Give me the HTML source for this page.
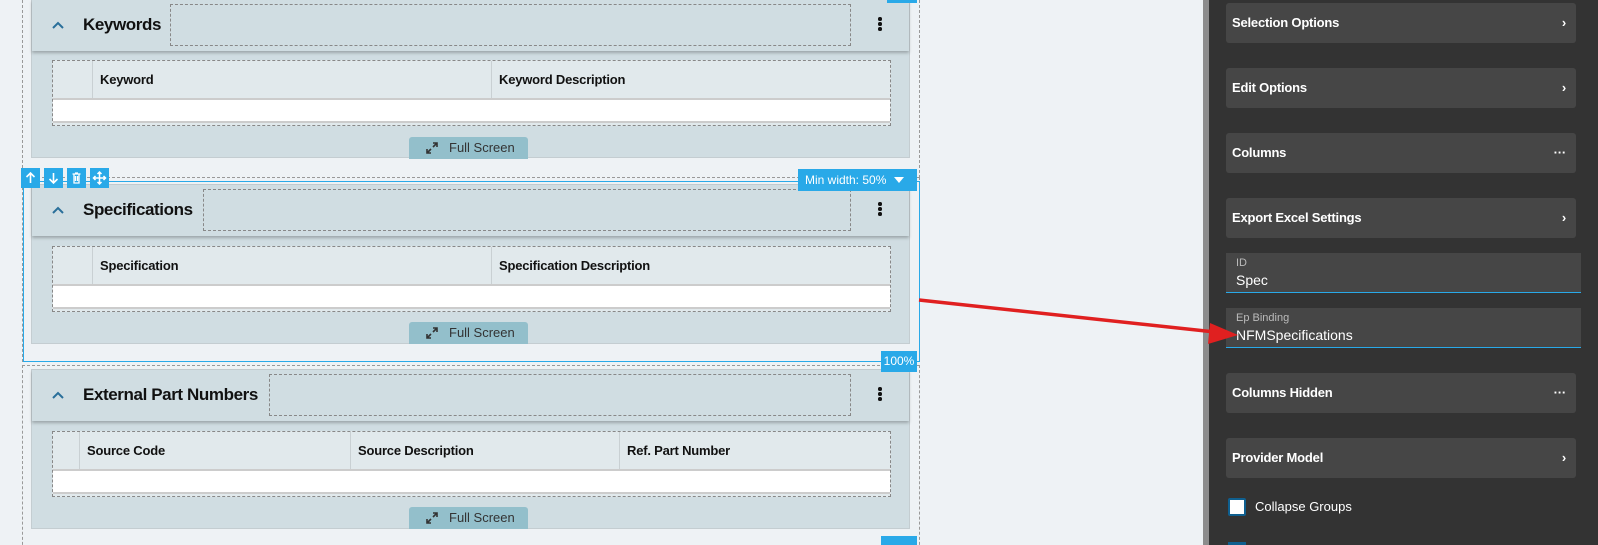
<!DOCTYPE html>
<html style="width:1598px;height:545px;overflow:hidden"><head><meta charset="utf-8"><style>
*{margin:0;padding:0;box-sizing:border-box}
body{width:1598px;height:545px;overflow:hidden;background:#eef2f5;position:relative;font-family:"Liberation Sans",sans-serif}
.a{position:absolute}
.dash{position:absolute;border:1px dashed #999}
.card{position:absolute;background:#d0dde2;border:1px solid #c4cdd1}
.hdr{position:absolute;left:0;right:0;top:0;height:51px;background:#d0dde2;box-shadow:0 2px 3px rgba(0,0,0,.25)}
.title{position:absolute;left:51px;top:15px;font-size:17px;font-weight:bold;color:#111;letter-spacing:-0.4px}
.chev{position:absolute;left:20px;top:21px;width:12px;height:8px}
.ph{position:absolute;top:4px;height:42px;border:1px dashed #888}
.keb{position:absolute;top:17px;width:4px}
.keb i{display:block;width:3.5px;height:3.5px;background:#111;border-radius:50%;margin-bottom:1.5px}
.tbl{position:absolute;border:1px dashed #888;background:#e1e9ec}
.th{position:absolute;top:0;height:37px;border-right:1px solid #c9d0d3;font-size:13px;font-weight:bold;color:#111;line-height:37px;padding-left:7px;letter-spacing:-0.2px}
.row{position:absolute;left:0;right:0;top:37px;height:25px;background:#fff;border-top:2px solid #ccc;border-bottom:2px solid #ccc}
.fs{position:absolute;width:119px;height:22px;background:#93bfcb;border-radius:3px 3px 0 0;font-size:13px;color:#333;line-height:22px;padding-left:40px}
.fs svg{position:absolute;left:17px;top:5px}
.blue{background:#29a9e8;color:#fff;position:absolute;z-index:5}
.tb{position:absolute;top:168px;width:19px;height:20px;background:#29a9e8;z-index:5}
.rp{position:absolute;left:1209px;top:0;width:389px;height:545px;background:#333}
.rc{position:absolute;left:1226px;width:350px;height:40px;background:#464646;border-radius:3px;color:#fff;font-size:13px;font-weight:bold;line-height:40px;padding-left:6px;letter-spacing:-0.2px}
.rc .r{position:absolute;right:10px;top:0;font-size:13px}
.fld{position:absolute;left:1226px;width:355px;height:40px;background:#464646;border-bottom:1px solid #29a9e8;color:#fff}
.fld .l{position:absolute;left:10px;top:4px;font-size:11px;color:#bbb}
.fld .v{position:absolute;left:10px;top:19px;font-size:14px}
</style></head><body>

<div class="dash" style="left:22px;top:-5px;width:898px;height:183px"></div>
<div class="dash" style="left:22px;top:177px;width:898px;height:185px"></div>
<div class="dash" style="left:22px;top:365px;width:898px;height:190px"></div>

<!-- Keywords -->
<div class="card" style="left:31px;top:-1px;width:879px;height:159px">
 <div class="hdr"><svg class="chev" viewBox="0 0 12 8"><path d="M1 7L6 2L11 7" stroke="#2a6f9a" stroke-width="2" fill="none"/></svg>
  <div class="title">Keywords</div>
  <div class="ph" style="left:138px;width:681px"></div>
  <div class="keb" style="left:846px"><i></i><i></i><i></i></div></div>
 <div class="tbl" style="left:20px;top:60px;width:839px;height:66px">
  <div class="th" style="left:0;width:40px"></div>
  <div class="th" style="left:40px;width:399px">Keyword</div>
  <div class="th" style="left:439px;width:398px;border-right:none">Keyword Description</div>
  <div class="row"></div></div>
 <div class="fs" style="left:377px;top:137px"><svg width="12" height="12" viewBox="0 0 12 12"><path d="M7 1h4v4M11 1L7 5M1 7v4h4M1 11l4-4" stroke="#333" stroke-width="1.6" fill="none"/></svg>Full Screen</div>
</div>
<div class="blue" style="left:887px;top:0;width:30px;height:3px"></div>

<div class="a" style="left:23px;top:181px;width:897px;height:181px;border:1px solid #29a9e8"></div>

<!-- Specifications -->
<div class="card" style="left:31px;top:184px;width:879px;height:160px">
 <div class="hdr"><svg class="chev" viewBox="0 0 12 8"><path d="M1 7L6 2L11 7" stroke="#2a6f9a" stroke-width="2" fill="none"/></svg>
  <div class="title">Specifications</div>
  <div class="ph" style="left:171px;width:648px"></div>
  <div class="keb" style="left:846px"><i></i><i></i><i></i></div></div>
 <div class="tbl" style="left:20px;top:61px;width:839px;height:66px">
  <div class="th" style="left:0;width:40px"></div>
  <div class="th" style="left:40px;width:399px">Specification</div>
  <div class="th" style="left:439px;width:398px;border-right:none">Specification Description</div>
  <div class="row"></div></div>
 <div class="fs" style="left:377px;top:137px"><svg width="12" height="12" viewBox="0 0 12 12"><path d="M7 1h4v4M11 1L7 5M1 7v4h4M1 11l4-4" stroke="#333" stroke-width="1.6" fill="none"/></svg>Full Screen</div>
</div>
<div class="tb" style="left:21px"><svg width="19" height="20" viewBox="0 0 19 20"><path d="M9.5 15V5M5.5 9l4-4 4 4" stroke="#fff" stroke-width="1.6" fill="none"/></svg></div>
<div class="tb" style="left:44px"><svg width="19" height="20" viewBox="0 0 19 20"><path d="M9.5 5v10M5.5 11l4 4 4-4" stroke="#fff" stroke-width="1.6" fill="none"/></svg></div>
<div class="tb" style="left:67px"><svg width="19" height="20" viewBox="0 0 19 20"><path d="M5.5 6h8M7 6v9h5V6M8.5 8v5M10.5 8v5M8 5h3" stroke="#fff" stroke-width="1.3" fill="none"/></svg></div>
<div class="tb" style="left:90px"><svg width="19" height="20" viewBox="0 0 19 20"><path d="M9.5 4v12M3.5 10h12M7.5 6l2-2 2 2M7.5 14l2 2 2-2M5.5 8l-2 2 2 2M13.5 8l2 2-2 2" stroke="#fff" stroke-width="1.5" fill="none"/></svg></div>
<div class="blue" style="left:798px;top:169px;width:119px;height:22px;font-size:12px;line-height:22px;padding-left:7px">Min width: 50%<svg style="position:absolute;right:13px;top:8px" width="10" height="6"><path d="M0 0h10L5 6z" fill="#fff"/></svg></div>
<div class="blue" style="left:881px;top:351px;width:36px;height:21px;font-size:12px;line-height:21px;text-align:center">100%</div>

<!-- External -->
<div class="card" style="left:31px;top:369px;width:879px;height:160px">
 <div class="hdr"><svg class="chev" viewBox="0 0 12 8"><path d="M1 7L6 2L11 7" stroke="#2a6f9a" stroke-width="2" fill="none"/></svg>
  <div class="title">External Part Numbers</div>
  <div class="ph" style="left:237px;width:582px"></div>
  <div class="keb" style="left:846px"><i></i><i></i><i></i></div></div>
 <div class="tbl" style="left:20px;top:61px;width:839px;height:66px">
  <div class="th" style="left:0;width:27px"></div>
  <div class="th" style="left:27px;width:271px">Source Code</div>
  <div class="th" style="left:298px;width:269px">Source Description</div>
  <div class="th" style="left:567px;width:270px;border-right:none">Ref. Part Number</div>
  <div class="row"></div></div>
 <div class="fs" style="left:377px;top:137px"><svg width="12" height="12" viewBox="0 0 12 12"><path d="M7 1h4v4M11 1L7 5M1 7v4h4M1 11l4-4" stroke="#333" stroke-width="1.6" fill="none"/></svg>Full Screen</div>
</div>
<div class="blue" style="left:881px;top:536px;width:36px;height:12px"></div>

<!-- right panel -->
<div class="a" style="left:1203px;top:0;width:6px;height:545px;background:#8c8c8c"></div>
<div class="rp"></div>
<div class="rc" style="top:3px">Selection Options<span class="r">›</span></div>
<div class="rc" style="top:68px">Edit Options<span class="r">›</span></div>
<div class="rc" style="top:133px">Columns<span class="r">···</span></div>
<div class="rc" style="top:198px">Export Excel Settings<span class="r">›</span></div>
<div class="fld" style="top:253px"><span class="l">ID</span><span class="v">Spec</span></div>
<div class="fld" style="top:308px"><span class="l">Ep Binding</span><span class="v">NFMSpecifications</span></div>
<div class="rc" style="top:373px">Columns Hidden<span class="r">···</span></div>
<div class="rc" style="top:438px">Provider Model<span class="r">›</span></div>
<div class="a" style="left:1228px;top:498px;width:18px;height:18px;background:#fff;border:2px solid #0f5f8f;border-radius:2px"></div>
<div class="a" style="left:1255px;top:499px;color:#fff;font-size:13px">Collapse Groups</div>
<div class="a" style="left:1228px;top:542px;width:18px;height:3px;background:#0f5f8f"></div>

<svg class="a" style="left:0;top:0" width="1598" height="545"><line x1="919" y1="300" x2="1215" y2="332" stroke="#e02020" stroke-width="3.5"/><path d="M1238 335L1210 323L1208 344Z" fill="#e02020"/></svg>
</body></html>
